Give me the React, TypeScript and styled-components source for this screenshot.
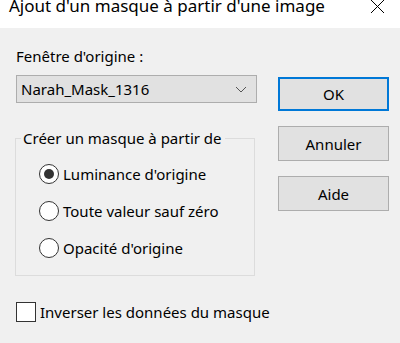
import styled, { createGlobalStyle } from "styled-components";

const GlobalStyle = createGlobalStyle`
  html, body {
    margin: 0;
    padding: 0;
    background: #f0f0f0;
  }
  body {
    font-family: "Noto Sans", "Open Sans", "Liberation Sans", sans-serif;
    color: #000;
  }
`

const Window = styled.div`
  width: 400px;
  height: 343px;
  background: #f0f0f0;
  overflow: hidden;
  box-sizing: border-box;
`

// the screenshot crops the top of the title bar
const TitleBar = styled.div`
  height: 28px;
  background: #fff;
  display: flex;
  align-items: flex-start;
  justify-content: space-between;
  padding-left: 9px;
  overflow: hidden;
`

const Title = styled.div`
  font-size: 17px;
  line-height: 18px;
  margin-top: -3px;
  color: #000;
  white-space: nowrap;
`

const CloseBox = styled.div`
  width: 46px;
  height: 14px;
  display: flex;
  align-items: center;
  justify-content: center;
`

const Body = styled.div`
  display: flex;
  padding: 18px 0 0 16px;
`

const LeftColumn = styled.div`
  width: 241px;
  display: flex;
  flex-direction: column;
`

const RightColumn = styled.div`
  width: 111px;
  margin-left: 21px;
  padding-top: 31px;
  display: flex;
  flex-direction: column;
  gap: 15px;
`

const Label = styled.div`
  font-size: 15px;
  line-height: 20px;
`

const Select = styled.div`
  margin-top: 9px;
  height: 28px;
  box-sizing: border-box;
  border: 1px solid #adadad;
  background: #e1e1e1;
  display: flex;
  align-items: center;
  justify-content: space-between;
  padding: 0 9px 0 4px;
  font-size: 15px;
`

const Group = styled.fieldset`
  margin: 25px 0 0 -1px;
  width: 240px;
  height: 148px;
  box-sizing: border-box;
  border: 1px solid #dcdcdc;
  padding: 0;
  display: flex;
  flex-direction: column;
  gap: 17px;
`

const Legend = styled.legend`
  font-size: 15px;
  line-height: 20px;
  padding: 0 3px 0 2px;
  margin-left: 5px;
`

const OptionRow = styled.label<{ $first?: boolean }>`
  display: flex;
  align-items: center;
  gap: 4px;
  font-size: 15px;
  line-height: 20px;
  padding-left: 23px;
  margin-top: ${p => (p.$first ? "16px" : "0")};
`

const RadioCircle = styled.span<{ $checked?: boolean }>`
  width: 20px;
  height: 20px;
  box-sizing: border-box;
  border-radius: 50%;
  border: 1px solid #333;
  background: #fff;
  display: flex;
  align-items: center;
  justify-content: center;
  &::after {
    content: "";
    width: 10px;
    height: 10px;
    border-radius: 50%;
    background: #333;
    display: ${p => (p.$checked ? "block" : "none")};
  }
`

const CheckRow = styled.label`
  display: flex;
  align-items: center;
  gap: 4px;
  font-size: 15px;
  line-height: 20px;
  margin-top: 26px;
  white-space: nowrap;
  width: max-content;
`

const CheckBox = styled.span`
  width: 20px;
  height: 20px;
  box-sizing: border-box;
  border: 1px solid #333;
  background: #fff;
`

const Button = styled.div<{ $primary?: boolean }>`
  height: ${p => (p.$primary ? "34px" : "35px")};
  box-sizing: border-box;
  background: #e1e1e1;
  border: ${p => (p.$primary ? "2px solid #0078d7" : "1px solid #adadad")};
  display: flex;
  align-items: center;
  justify-content: center;
  font-size: 15px;
`

const options = [
  { label: "Luminance d'origine", checked: true },
  { label: "Toute valeur sauf zéro", checked: false },
  { label: "Opacité d'origine", checked: false },
]

const App = () => {
  return (
    <Window>
      <GlobalStyle />
      <TitleBar>
        <Title>Ajout d'un masque à partir d'une image</Title>
        <CloseBox>
          <svg width="14" height="14" viewBox="0 0 14 14">
            <path d="M1 0L14 13M14 0L1 13" stroke="#000" strokeWidth="1" />
          </svg>
        </CloseBox>
      </TitleBar>
      <Body>
        <LeftColumn>
          <Label>Fenêtre d'origine :</Label>
          <Select>
            <span>Narah_Mask_1316</span>
            <svg width="12" height="7" viewBox="0 0 12 7">
              <path d="M1 1L6 6L11 1" fill="none" stroke="#555" strokeWidth="1" />
            </svg>
          </Select>
          <Group>
            <Legend>Créer un masque à partir de</Legend>
            {options.map((o, i) => (
              <OptionRow key={o.label} $first={i === 0}>
                <RadioCircle $checked={o.checked} />
                {o.label}
              </OptionRow>
            ))}
          </Group>
          <CheckRow>
            <CheckBox />
            Inverser les données du masque
          </CheckRow>
        </LeftColumn>
        <RightColumn>
          <Button $primary>OK</Button>
          <Button>Annuler</Button>
          <Button>Aide</Button>
        </RightColumn>
      </Body>
    </Window>
  )
}

export default App;
